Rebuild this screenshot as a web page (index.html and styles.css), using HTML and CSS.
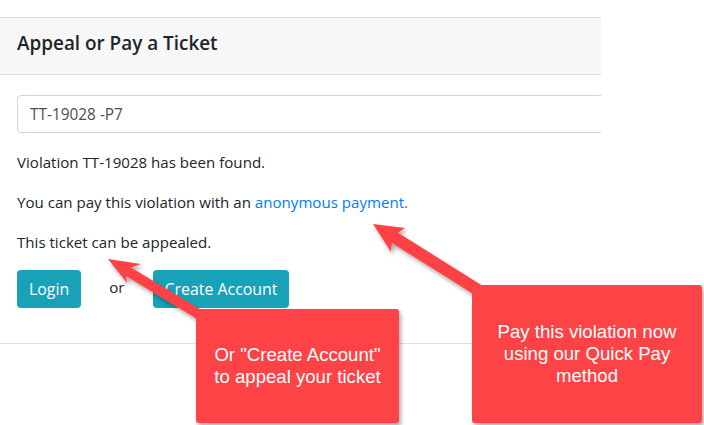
FILE: index.html
```html
<!DOCTYPE html>
<html lang="en">
<head>
<meta charset="utf-8">
<title>Appeal or Pay a Ticket</title>
<link rel="stylesheet" href="styles.css">
</head>
<body>
<div class="page">
  <section class="card">
    <header class="card-header">
      <h5 class="card-title">Appeal or Pay a Ticket</h5>
    </header>
    <div class="card-body">
      <input class="form-control" type="text" value="TT-19028 -P7">
      <p>Violation TT-19028 has been found.</p>
      <p>You can pay this violation with an <a href="#" class="link">anonymous payment.</a></p>
      <p>This ticket can be appealed.</p>
      <div class="actions">
        <a href="#" class="btn">Login</a>
        <span class="or">or</span>
        <a href="#" class="btn">Create Account</a>
      </div>
    </div>
  </section>
</div>

<svg class="arrows" width="704" height="425" viewBox="0 0 704 425" aria-hidden="true">
  <defs>
    <filter id="shadow" x="-20%" y="-20%" width="140%" height="140%">
      <feDropShadow dx="2" dy="3" stdDeviation="2" flood-color="#000" flood-opacity="0.35"/>
    </filter>
  </defs>
  <polygon filter="url(#shadow)" fill="#fd4345"
    points="108,259 141,264 131,267.5 207.6,313.7 202.4,322.3 126,276 127,283"/>
  <polygon filter="url(#shadow)" fill="#fd4345"
    points="373,224 405,228 398,232.7 481.2,284.9 474.8,295.1 391.8,242.9 391,252"/>
</svg>

<div class="callout callout-account">Or "Create Account"<br>to appeal your ticket</div>
<div class="callout callout-pay">Pay this violation now<br>using our Quick Pay<br>method</div>
</body>
</html>
```
FILE: styles.css
```css
html, body {
  margin: 0;
  padding: 0;
  background: #fff;
}

body {
  position: relative;
  width: 704px;
  height: 425px;
  overflow: hidden;
  font-family: "Open Sans", "Noto Sans", sans-serif;
  font-size: 15.1px;
  line-height: 24px;
  color: #212529;
}

.page {
  padding-top: 17px;
}

.card {
  width: 601px;
  border-top: 1px solid #dedede;
  border-bottom: 1px solid #dedede;
  overflow: hidden;
}

.card-header {
  background: #f7f7f7;
  border-bottom: 1px solid #dedede;
  padding: 13px 17px 19px;
}

.card-title {
  margin: 0;
  font-size: 18.9px;
  font-weight: 600;
  line-height: 24px;
  color: #212529;
}

.card-body {
  padding: 20px 0 20px 17px;
}

.form-control {
  display: block;
  box-sizing: border-box;
  width: calc(100% + 6px);
  height: 38px;
  margin: 0 0 17px;
  padding: 6px 12px;
  border: 1px solid #ced4da;
  border-radius: 4px;
  font-family: inherit;
  font-size: 15.4px;
  color: #495057;
  background: #fff;
}

.card-body p {
  margin: 0 0 16px;
}

.link {
  color: #007bff;
  text-decoration: none;
}

.actions {
  display: flex;
  align-items: center;
  margin-bottom: 15px;
}

.btn {
  display: inline-block;
  height: 38px;
  box-sizing: border-box;
  padding: 7px 12px;
  border-radius: 4px;
  background: #17a2b8;
  color: #fff;
  text-decoration: none;
  font-size: 15.9px;
  line-height: 24px;
}

.or {
  margin: -4px 28px 0;
}

.arrows {
  position: absolute;
  left: 0;
  top: 0;
  pointer-events: none;
}

.callout {
  position: absolute;
  display: flex;
  align-items: center;
  justify-content: center;
  box-sizing: border-box;
  background: #fd4345;
  color: #fff;
  border-radius: 3px;
  box-shadow: 2px 3px 4px rgba(0, 0, 0, 0.35);
  font-family: "Liberation Sans", Arial, sans-serif;
  font-size: 18.6px;
  line-height: 22px;
  text-align: center;
}

.callout-account {
  left: 196px;
  top: 309px;
  width: 203px;
  height: 114px;
}

.callout-pay {
  left: 472px;
  top: 285px;
  width: 230px;
  height: 138px;
}
```
